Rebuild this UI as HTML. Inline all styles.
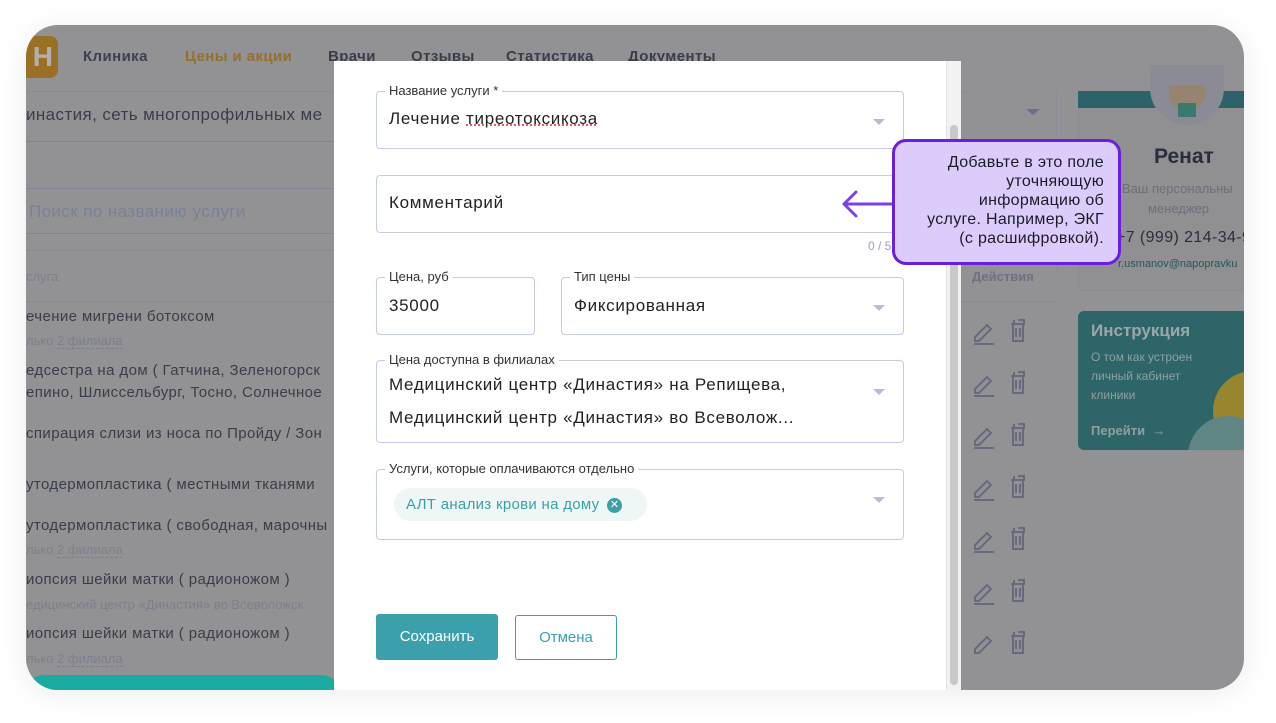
<!DOCTYPE html>
<html><head><meta charset="utf-8"><style>
*{box-sizing:border-box;margin:0;padding:0}
body{width:1276px;height:723px;background:#fff;font-family:"Liberation Sans","Noto Sans CJK SC",sans-serif;position:relative;overflow:hidden}
.card{position:absolute;left:26px;top:25px;width:1218px;height:665px;border-radius:32px;overflow:hidden;background:#929294;box-shadow:0 4px 30px rgba(0,0,0,.08)}
.a{position:absolute}
.t{color:#3a3d4a;font-size:15px;white-space:nowrap;letter-spacing:.4px}
.s{color:#7d7f8c;font-size:13px;white-space:nowrap}
.hl{position:absolute;left:0;height:1px;background:#868892}
.modal{position:absolute;left:308px;top:36px;width:612px;height:629px;background:#fff}
.sb{position:absolute;left:920px;top:36px;width:15px;height:629px;background:#f2f2f2;border-left:1px solid #e2e2e2}
.f{position:absolute;border:1px solid #c3cbe6;border-radius:4px;background:#fff}
.lab{position:absolute;top:-9px;left:8px;background:#fff;padding:0 4px;font-size:13px;color:#333;white-space:nowrap}
.v{position:absolute;left:12px;font-size:17px;color:#222;white-space:nowrap;letter-spacing:.7px}
.arr{position:absolute;right:18px;width:0;height:0;border-left:6px solid transparent;border-right:6px solid transparent;border-top:6px solid #b6bdd6}
</style></head><body>
<div class="card">
  <div class="a" style="left:-10px;top:11px;width:42px;height:42px;border-radius:8px;background:#9a7024;color:#b0b0b0;font-weight:bold;font-size:28px;line-height:42px;text-align:right;padding-right:5px">H</div>
  <div class="a t" style="left:57px;top:23px;color:#3c4050;font-weight:bold;font-size:15px">Клиника</div>
  <div class="a t" style="left:159px;top:23px;color:#94702a;font-weight:bold">Цены и акции</div>
  <div class="a t" style="left:302px;top:23px;font-weight:bold">Врачи</div>
  <div class="a t" style="left:385px;top:23px;font-weight:bold">Отзывы</div>
  <div class="a t" style="left:480px;top:23px;font-weight:bold">Статистика</div>
  <div class="a t" style="left:602px;top:23px;font-weight:bold">Документы</div>
  <div class="hl" style="top:66px;width:940px;background:#8a8b90"></div>
  <div class="a t" style="left:0;top:80px;font-size:17px">инастия, сеть многопрофильных ме</div>
  <div class="hl" style="top:116px;width:940px;background:#7e8599"></div>
  <div class="hl" style="top:163px;width:940px;background:#7e8599"></div>
  <div class="a t" style="left:3px;top:177px;font-size:17px;color:#7a8196">Поиск по названию услуги</div>
  <div class="hl" style="top:208px;width:940px;background:#7e8599"></div>
  <div class="hl" style="top:225px;width:1030px;background:#898a90"></div>
  <div class="a s" style="left:0;top:244px">слуга</div>
  <div class="a s" style="left:946px;top:244px;font-weight:bold;color:#6f7180">Действия</div>
  <div class="hl" style="top:276px;width:1030px;background:#898a90"></div>
  <div class="a t" style="left:0;top:283px">ечение мигрени ботоксом</div>
  <div class="a s" style="left:0;top:308px">лько <span style="border-bottom:1px dashed #7d7f8c">2 филиала</span></div>
  <div class="a t" style="left:0;top:337px">едсестра на дом ( Гатчина, Зеленогорск</div>
  <div class="a t" style="left:0;top:359px">епино, Шлиссельбург, Тосно, Солнечное</div>
  <div class="a t" style="left:0;top:400px">спирация слизи из носа по Пройду / Зон</div>
  <div class="a t" style="left:0;top:451px">утодермопластика ( местными тканями</div>
  <div class="a t" style="left:0;top:492px">утодермопластика ( свободная, марочны</div>
  <div class="a s" style="left:0;top:517px">лько <span style="border-bottom:1px dashed #7d7f8c">2 филиала</span></div>
  <div class="a t" style="left:0;top:546px">иопсия шейки матки ( радионожом )</div>
  <div class="a s" style="left:0;top:572px">едицинский центр «Династия» во Всеволожск</div>
  <div class="a t" style="left:0;top:600px">иопсия шейки матки ( радионожом )</div>
  <div class="a s" style="left:0;top:626px">лько <span style="border-bottom:1px dashed #7d7f8c">2 филиала</span></div>
  <div class="a" style="left:0;top:650px;width:314px;height:30px;border-radius:18px 18px 0 0;background:#19ab9f"></div>
  <svg class="a" style="left:945px;top:290px" width="60" height="340" viewBox="0 0 60 340" fill="none" stroke="#666a7c" stroke-width="2">
    <g id="ic"><path d="M4 22 L16 10 L20 14 L8 26 L4 26 Z M3 29 H23"/><path d="M47 5h6v3 M43 8v-3 M40 9h14 M42 9v17h10V9 M45 13v9 M49 13v9"/></g>
    <use href="#ic" y="52"/><use href="#ic" y="104"/><use href="#ic" y="156"/><use href="#ic" y="208"/><use href="#ic" y="260"/><use href="#ic" y="312"/>
  </svg>
  <div class="a" style="left:1030px;top:66px;width:1px;height:180px;background:#888b98"></div>
  <div class="a" style="top:84px;width:0;height:0;border-left:7px solid transparent;border-right:7px solid transparent;border-top:6px solid #6a7190;left:1000px"></div>
  <div class="a" style="left:1052px;top:66px;width:170px;height:200px;background:#909093;border:1px solid #8a8b90;border-radius:6px"></div>
  <div class="a" style="left:1052px;top:66px;width:170px;height:17px;background:#2c6368"></div>
  <div class="a" style="left:1124px;top:40px;width:74px;height:60px;border-radius:0 0 37px 37px;background:#8a8b94"></div>
  <div class="a" style="left:1143px;top:60px;width:36px;height:26px;border-radius:0 0 18px 18px;background:#97846f"></div>
  <div class="a" style="left:1152px;top:78px;width:18px;height:14px;background:#3a7a6e"></div>
  <div class="a" style="left:1128px;top:120px;font-size:21px;font-weight:bold;color:#2a2d3e">Ренат</div>
  <div class="a s" style="left:1096px;top:156px;color:#6c6e7a">Ваш персональны</div>
  <div class="a s" style="left:1122px;top:176px;color:#6c6e7a">менеджер</div>
  <div class="a t" style="left:1090px;top:204px;font-size:16px;color:#2a2d3e">+7 (999) 214-34-9</div>
  <div class="a" style="left:1092px;top:233px;font-size:11px;color:#27555c">r.usmanov@napopravku</div>
  <div class="a" style="left:1052px;top:286px;width:170px;height:139px;background:#2d6569;border-radius:6px;overflow:hidden">
    <div class="a" style="left:135px;top:60px;width:80px;height:80px;border-radius:50%;background:#98862e"></div>
    <div class="a" style="left:110px;top:105px;width:80px;height:80px;border-radius:50%;background:#5f8585"></div>
    <div class="a" style="left:13px;top:10px;font-size:17px;font-weight:bold;color:#9aa7a9">Инструкция</div>
    <div class="a" style="left:13px;top:37px;font-size:12px;line-height:19px;color:#8fa0a2">О том как устроен<br>личный кабинет<br>клиники</div>
    <div class="a" style="left:13px;top:112px;font-size:13px;font-weight:bold;color:#8fa0a2">Перейти &nbsp;→</div>
  </div>
  <div class="modal">
    <div class="f" style="left:42px;top:30px;width:528px;height:58px"><div class="lab">Название услуги *</div><div class="v" style="top:17px">Лечение <span style="text-decoration:underline dotted #e04a4a">тиреотоксикоза</span></div><div class="arr" style="top:27px"></div></div>
    <div class="f" style="left:42px;top:114px;width:528px;height:58px"><div class="v" style="top:17px">Комментарий</div></div>
    <div class="a" style="left:534px;top:178px;font-size:12px;color:#9aa0b8">0 / 5</div>
    <div class="f" style="left:42px;top:216px;width:159px;height:58px"><div class="lab">Цена, руб</div><div class="v" style="top:18px">35000</div></div>
    <div class="f" style="left:227px;top:216px;width:343px;height:58px"><div class="lab">Тип цены</div><div class="v" style="top:18px">Фиксированная</div><div class="arr" style="top:27px"></div></div>
    <div class="f" style="left:42px;top:299px;width:528px;height:83px"><div class="lab">Цена доступна в филиалах</div><div class="v" style="top:14px">Медицинский центр «Династия» на Репищева,</div><div class="v" style="top:47px">Медицинский центр «Династия» во Всеволож...</div><div class="arr" style="top:28px"></div></div>
    <div class="f" style="left:42px;top:408px;width:528px;height:71px"><div class="lab">Услуги, которые оплачиваются отдельно</div>
      <div class="a" style="left:17px;top:18px;width:253px;height:33px;border-radius:17px;background:#eef7f6;color:#3ba0a6;font-size:15px;line-height:33px;padding-left:12px;letter-spacing:.3px">АЛТ анализ крови на дому <span style="display:inline-block;width:15px;height:15px;border-radius:50%;background:#3a9fa6;color:#fff;font-size:11px;line-height:15px;text-align:center;vertical-align:1px;margin-left:3px;letter-spacing:0">✕</span></div>
      <div class="arr" style="top:27px"></div></div>
    <div class="a" style="left:42px;top:553px;width:122px;height:46px;background:#3ba0ac;border-radius:3px;color:#fff;font-size:15px;text-align:center;line-height:46px">Сохранить</div>
    <div class="a" style="left:181px;top:554px;width:102px;height:45px;border:1px solid #3ba0ac;border-radius:3px;color:#3ba0ac;font-size:15px;text-align:center;line-height:43px">Отмена</div>
  </div>
  <div class="sb"><div class="a" style="left:3px;top:64px;width:8px;height:560px;border-radius:4px;background:#c8c8c8"></div></div>
</div>
<svg class="a" style="left:838px;top:186px" width="60" height="36" viewBox="0 0 60 36" fill="none" stroke="#7b3ff0" stroke-width="3" stroke-linecap="round" stroke-linejoin="round"><path d="M58 18H7 M18 6 L6 18 L18 30"/></svg>
<div class="a" style="left:892px;top:139px;width:229px;height:126px;border:3px solid #6a1ee0;border-radius:14px;background:#dcccfc;text-align:right;padding:11px 14px 0 10px;font-size:16px;line-height:19px;color:#1c1c24;letter-spacing:.3px;white-space:nowrap">Добавьте в это поле<br>уточняющую<br>информацию об<br>услуге. Например, ЭКГ<br>(с расшифровкой).</div>
</body></html>
